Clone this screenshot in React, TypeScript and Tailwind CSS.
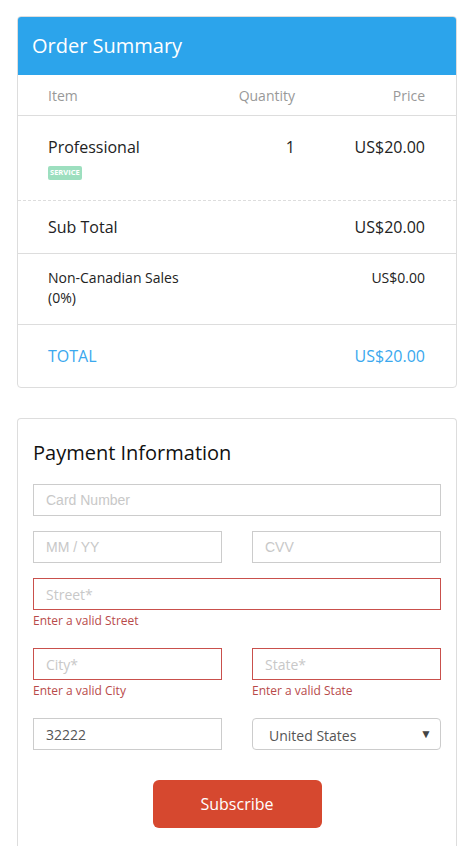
import React from "react";

const Input = ({ placeholder, error, value }: { placeholder?: string; error?: boolean; value?: string }) => (
  <div
    className={`h-[32px] border flex items-center pl-[12px] text-[14px] ${
      error ? "border-[#c9504c]" : "border-[#cccccc]"
    }`}
  >
    {value ? (
      <span className="text-[#555555] font-['Open_Sans',sans-serif]">{value}</span>
    ) : (
      <span
        className={`text-[#c8c8c8] ${
          error ? "font-['Open_Sans',sans-serif]" : "font-['Liberation_Sans',Arial,sans-serif]"
        }`}
      >
        {placeholder}
      </span>
    )}
  </div>
);

const Err = ({ children }: { children: React.ReactNode }) => (
  <div className="text-[12px] leading-[16px] mt-[3px] text-[#b84a4a]">{children}</div>
);

export default function App() {
  return (
    <div className="bg-white h-[846px] overflow-hidden pl-[17px] pt-[16px] font-['Open_Sans',sans-serif] text-[#222]">
      <div className="w-[440px]">
        {/* Order summary */}
        <div className="border border-[#dddddd] rounded-[4px] overflow-hidden">
          <div className="bg-[#2ca4eb] h-[58px] flex items-center px-[14px]">
            <span className="text-white text-[20px] leading-none">Order Summary</span>
          </div>
          <div className="grid grid-cols-[147px_100px_130px] pl-[30px] h-[41px] items-center border-b border-[#dddddd] text-[14px] text-[#999999]">
            <div>Item</div>
            <div className="text-right">Quantity</div>
            <div className="text-right">Price</div>
          </div>
          <div className="grid grid-cols-[147px_100px_130px] pl-[30px] h-[85px] pt-[20px] border-b border-dashed border-[#dddddd] text-[16px] leading-[22px]">
            <div>
              <div>Professional</div>
              <div className="mt-[6px] inline-flex items-center h-[14px] px-[2px] rounded-[2px] bg-[#9ddfbf] text-white text-[7.5px] font-bold leading-none">
                SERVICE
              </div>
            </div>
            <div className="text-right">1</div>
            <div className="text-right">US$20.00</div>
          </div>
          <div className="grid grid-cols-[147px_100px_130px] pl-[30px] h-[53px] items-center border-b border-[#dddddd] text-[16px]">
            <div>Sub Total</div>
            <div></div>
            <div className="text-right">US$20.00</div>
          </div>
          <div className="grid grid-cols-[147px_100px_130px] pl-[30px] h-[71px] pt-[14px] border-b border-[#dddddd] text-[14px] leading-[20px]">
            <div>Non-Canadian Sales (0%)</div>
            <div></div>
            <div className="text-right">US$0.00</div>
          </div>
          <div className="grid grid-cols-[147px_100px_130px] pl-[30px] h-[62px] items-center text-[16px] text-[#3aa8ee]">
            <div>TOTAL</div>
            <div></div>
            <div className="text-right">US$20.00</div>
          </div>
        </div>

        {/* Payment */}
        <div className="mt-[30px] border border-[#dddddd] border-b-0 rounded-t-[4px] px-[15px] pt-[19px] pb-[30px]">
          <div className="text-[20px] leading-[30px] text-[#111]">Payment Information</div>
          <div className="mt-[16px] flex flex-col">
            <Input placeholder="Card Number" />
            <div className="mt-[15px] grid grid-cols-2 gap-[30px]">
              <Input placeholder="MM / YY" />
              <Input placeholder="CVV" />
            </div>
            <div className="mt-[15px]">
              <Input placeholder="Street*" error />
              <Err>Enter a valid Street</Err>
            </div>
            <div className="mt-[19px] grid grid-cols-2 gap-[30px]">
              <div>
                <Input placeholder="City*" error />
                <Err>Enter a valid City</Err>
              </div>
              <div>
                <Input placeholder="State*" error />
                <Err>Enter a valid State</Err>
              </div>
            </div>
            <div className="mt-[19px] grid grid-cols-2 gap-[30px]">
              <Input value="32222" />
              <div className="h-[32px] border border-[#cccccc] rounded-[4px] flex items-center justify-between pl-[16px] pr-[8px] text-[14px] text-[#555555]">
                <span className="mt-[2px]">United States</span>
                <span className="text-[12px] text-[#444]">▼</span>
              </div>
            </div>
            <div className="mt-[30px] flex justify-center">
              <button className="w-[169px] h-[48px] rounded-[6px] bg-[#d6482f] text-white text-[16px]">Subscribe</button>
            </div>
          </div>
        </div>
      </div>
    </div>
  );
}
